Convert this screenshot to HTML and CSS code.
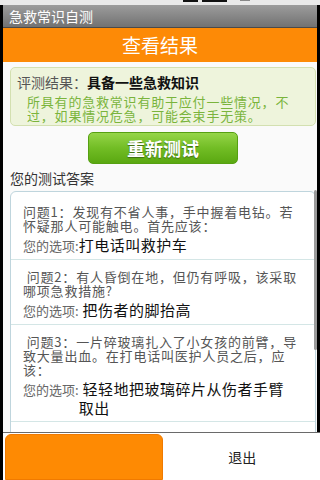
FILE: index.html
```html
<!DOCTYPE html>
<html>
    <head>
        <meta charset="utf-8">
        <link rel="stylesheet" href="styles.css">
        <title>急救常识自测</title>
    </head>
    <body>
        <div class="status-bar">
            <span class="status-icon signal"></span>
            <span class="status-icon battery"></span>
            <span class="status-icon clock"></span>
        </div>

        <div class="window">
            <div class="title-bar">急救常识自测</div>
            <div class="header">查看结果</div>

            <div class="content">
                <div class="result-box">
                    <p class="result-title">评测结果：<b>具备一些急救知识</b></p>
                    <p class="result-desc">所具有的急救常识有助于应付一些情况，不过，如果情况危急，可能会束手无策。</p>
                </div>

                <button class="retry-button">重新测试</button>

                <p class="section-title">您的测试答案</p>

                <div class="answer-box">
                    <div class="answer-item">
                        <p class="question">问题1：发现有不省人事，手中握着电钻。若怀疑那人可能触电。首先应该：</p>
                        <div class="choice">
                            <span class="choice-label">您的选项:</span>
                            <span class="choice-text">打电话叫救护车</span>
                        </div>
                    </div>
                    <div class="answer-item">
                        <p class="question">&nbsp;问题2：有人昏倒在地，但仍有呼吸，该采取哪项急救措施?</p>
                        <div class="choice">
                            <span class="choice-label">您的选项:</span>
                            <span class="choice-text">&nbsp;把伤者的脚抬高</span>
                        </div>
                    </div>
                    <div class="answer-item">
                        <p class="question">&nbsp;问题3：一片碎玻璃扎入了小女孩的前臂，导致大量出血。在打电话叫医护人员之后，应该：</p>
                        <div class="choice">
                            <span class="choice-label">您的选项:</span>
                            <span class="choice-text">&nbsp;轻轻地把玻璃碎片从伤者手臂取出</span>
                        </div>
                    </div>
                    <div class="answer-item is-last"></div>
                </div>
            </div>

            <div class="scroll-thumb"></div>
        </div>

        <div class="options-menu">
            <div class="menu-item is-selected"></div>
            <div class="menu-item">退出</div>
        </div>
    </body>
</html>
```

FILE: styles.css
```css
html, body {
    height: 480px;
    overflow: hidden;
}

body {
    margin: 0;
    background-color: black;
    font-family: "Noto Sans CJK SC", "Noto Sans", sans-serif;
}

p {
    margin: 0;
}

.status-bar {
    height: 5px;
    background-color: #e9e9e9;
    display: flex;
    align-items: flex-start;
    padding-left: 183px;
    gap: 4px;
}

.status-icon {
    height: 2px;
    background-color: #111;
}

.signal {
    width: 15px;
}

.battery {
    width: 25px;
}

.clock {
    width: 10px;
    height: 1px;
    margin-left: 9px;
    background-color: #888;
}

.window {
    position: relative;
    margin: 0 3px;
    height: 475px;
    background-color: #fafafa;
    overflow: hidden;
}

.title-bar {
    height: 22px;
    line-height: 22px;
    padding-left: 6px;
    color: white;
    font-size: 14px;
    background: linear-gradient(#9c9c9c, #727272);
    border-bottom: 1px solid #4a4a4a;
}

.header {
    height: 34px;
    line-height: 33px;
    text-align: center;
    color: white;
    font-size: 19px;
    background-color: #fd8a06;
}

.content {
    padding: 0 1px 0 7px;
}

.result-box {
    margin-top: 5px;
    padding: 6px 16px 2px 6px;
    background-color: #eef4dc;
    border: 1px solid #d3e0b0;
    border-radius: 5px;
}

.result-title {
    font-size: 14px;
    line-height: 16px;
    color: #555;
}

.result-title b {
    color: #111;
    font-weight: 600;
}

.result-desc {
    margin-top: 5px;
    margin-left: 10px;
    font-size: 13px;
    letter-spacing: 0.8px;
    line-height: 14px;
    color: #7ab43c;
}

.retry-button {
    display: block;
    width: 150px;
    height: 32px;
    margin: 6px auto 0;
    border: 1px solid #56a012;
    border-radius: 5px;
    background: linear-gradient(#95d548, #72bd25 50%, #5aa811);
    color: white;
    font-family: "Noto Sans CJK SC", sans-serif;
    font-size: 18px;
    font-weight: bold;
    text-shadow: 0 1px 1px #3d6b10;
}

.section-title {
    margin-top: 6px;
    font-size: 14px;
    line-height: 16px;
    color: #333;
}

.answer-box {
    margin-top: 5px;
    padding-top: 3px;
    height: 300px;
    background-color: white;
    border: 1px solid #bfd5dd;
    border-radius: 6px;
}

.answer-item {
    padding: 10px 12px 4px 12px;
    border-bottom: 1px solid #d4e6e6;
}

.is-last {
    border-bottom: none;
}

.question {
    font-size: 13px;
    letter-spacing: 0.8px;
    line-height: 14px;
    color: #555;
}

.choice {
    display: flex;
    align-items: baseline;
    margin-top: 2px;
}

.choice-label {
    font-size: 13px;
    color: #666;
    flex-shrink: 0;
}

.choice-text {
    max-width: 212px;
    font-size: 15px;
    letter-spacing: 0.5px;
    line-height: 19px;
    color: #111;
}

.scroll-thumb {
    position: absolute;
    right: 0;
    top: 185px;
    width: 3px;
    height: 160px;
    border-radius: 2px;
    background-color: #9a9a9a;
}

.options-menu {
    position: fixed;
    left: 3px;
    right: 0;
    bottom: 0;
    height: 47px;
    display: flex;
    border-top: 1px solid #6a6a6a;
    background-color: white;
}

.menu-item {
    flex: 1;
    display: flex;
    align-items: center;
    justify-content: center;
    font-size: 14px;
    color: #222;
}

.is-selected {
    margin: 1px 2px 0 2px;
    border-radius: 6px 6px 0 0;
    background-color: #fe8a03;
    border: 1px solid #f07a00;
}
```
